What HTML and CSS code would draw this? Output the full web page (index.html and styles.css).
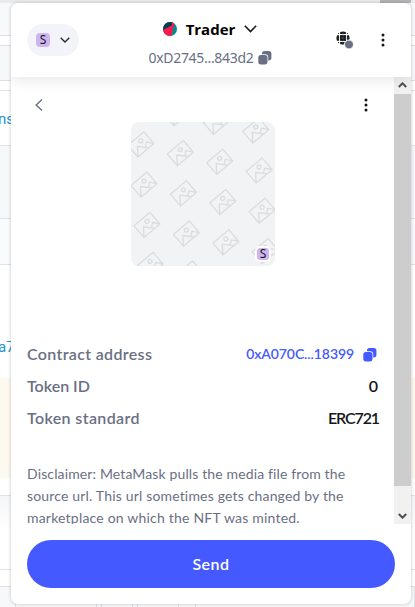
FILE: index.html
```html
<!DOCTYPE html>
<html lang="en">
<head>
<meta charset="utf-8">
<title>Wallet</title>
<link rel="stylesheet" href="styles.css">
</head>
<body>
<div class="page">
  <div class="bar"><i></i></div>
  <div class="strip s1"></div>
  <div class="strip s2"></div>
  <div class="strip s3"></div>
  <div class="strip s4"></div>
  <div class="strip s5">ns</div>
  <div class="strip s6"></div>
  <div class="strip s7"></div>
  <div class="strip s8">a7</div>
  <div class="strip s9"></div>
  <div class="strip s10"></div>
  <div class="strip s11"></div>
  <div class="strip s12"></div>
  <div class="strip s13"><b></b><b></b><b></b><b></b></div>
</div>
<main class="popup">
  <header class="header">
    <button class="network"><span class="badge">S</span>
      <svg width="10" height="6" viewBox="0 0 10 6"><path d="M.7.7 5 5 9.3.7" fill="none" stroke="#24272a" stroke-width="1.3"/></svg>
    </button>
    <div class="account">
      <div class="name">
        <svg class="avatar" width="14" height="14" viewBox="0 0 14 14"><defs><clipPath id="av"><circle cx="7" cy="7" r="7"/></clipPath></defs><g clip-path="url(#av)"><path fill="#018e8c" d="M0 0h14v14H0z"/><path fill="#fc1950" d="M0 7.5 11 2 8.5 14H0z"/><path fill="#033f50" d="M0 0h10.5L9.5 3 0 8z"/><path fill="#fc1950" d="M9 0h2.5L11 4 9 3.5z"/></g></svg>
        <span>Trader</span>
        <svg width="13" height="8" viewBox="0 0 13 8"><path d="M.8.8 6.5 6.6 12.2.8" fill="none" stroke="#141618" stroke-width="1.5"/></svg>
      </div>
      <div class="address"><span>0xD2745...843d2</span>
        <svg width="14" height="14" viewBox="0 0 14 14"><use href="#copy"/></svg>
      </div>
    </div>
    <div class="actions">
      <svg width="18" height="18" viewBox="0 0 18 18"><circle cx="7" cy="7" r="6.6" fill="#141618"/><path d="M3.6 0v14M10.4 0v14M0 3.6h14M0 10.4h14" stroke="#fff" stroke-width="1.1" fill="none"/><path d="M4.2 4.2h5.6v5.6H4.2z" fill="#141618"/><path d="M7 .5v13M.5 7h13" stroke="#777" stroke-width=".4"/><circle cx="13" cy="13.5" r="4.5" fill="#6a7084" stroke="#fff"/></svg>
      <svg width="4" height="14" viewBox="0 0 4 14" fill="#141618"><circle cx="2" cy="2" r="1.5"/><circle cx="2" cy="7" r="1.5"/><circle cx="2" cy="12" r="1.5"/></svg>
    </div>
  </header>
  <div class="body">
    <section class="content">
      <div class="nav">
        <svg width="8" height="12" viewBox="0 0 8 12"><path d="M7 .5 1.2 6 7 11.5" fill="none" stroke="#6a7084" stroke-width="1.4"/></svg>
        <svg width="4" height="14" viewBox="0 0 4 14" fill="#141618"><circle cx="2" cy="2" r="1.5"/><circle cx="2" cy="7" r="1.5"/><circle cx="2" cy="12" r="1.5"/></svg>
      </div>
      <div class="nft">
        <svg width="144" height="144" viewBox="0 0 144 144">
          <defs>
            <g id="pic" fill="none" stroke="#dadcde" stroke-width="1.3" stroke-linejoin="round"><path d="M-13 1 3-12.5 13-.7-3 12.7ZM-3 12.7-3.5 2 8 3.5M4.5 3 5.5-2.3 13-.9"/><circle cx="0" cy="-3.4" r="2"/></g>
            <g id="row"><use href="#pic" x="-39.4" y="-8.7"/><use href="#pic"/><use href="#pic" x="39.4" y="8.7"/><use href="#pic" x="78.8" y="17.4"/></g>
            <g id="copy"><rect x="4" y="0" width="9.4" height="9.4" rx="2.6" fill="currentColor"/><rect x="-.4" y="3.3" width="10.6" height="10.6" rx="3" fill="#fff"/><rect x=".3" y="4" width="9.2" height="9.4" rx="2.6" fill="currentColor"/></g>
          </defs>
          <use href="#row" x="46" y="-9"/><use href="#row" x="49.3" y="31"/><use href="#row" x="52.4" y="71.2"/><use href="#row" x="55.4" y="111.5"/><use href="#row" x="58.5" y="151.5"/>
        </svg>
        <span class="badge small">S</span>
      </div>
      <dl class="details">
        <div><dt class="k1">Contract address</dt><dd class="link"><span>0xA070C...18399</span><svg width="14" height="14" viewBox="0 0 14 14"><use href="#copy"/></svg></dd></div>
        <div><dt class="k2">Token ID</dt><dd>0</dd></div>
        <div><dt class="k3">Token standard</dt><dd class="std">ERC721</dd></div>
      </dl>
      <p class="disclaimer"><span class="l1">Disclaimer: MetaMask pulls the media file from the</span><br><span class="l2">source url. This url sometimes gets changed by the</span><br><span class="l3">marketplace on which the NFT was minted.</span></p>
    </section>
    <div class="scrollbar">
      <svg width="9" height="6" viewBox="0 0 9 6"><path d="M.8 5 4.5 1.3 8.2 5" fill="none" stroke="#505050" stroke-width="2"/></svg>
      <i></i>
      <svg width="9" height="6" viewBox="0 0 9 6"><path d="M.8 1 4.5 4.7 8.2 1" fill="none" stroke="#505050" stroke-width="2"/></svg>
    </div>
  </div>
  <footer class="footer"><button class="send">Send</button></footer>
</main>
</body>
</html>
```
FILE: styles.css
```css
* { box-sizing: border-box; }
body { margin: 0; width: 415px; height: 607px; overflow: hidden; position: relative; background: #fff; font-family: Lato, "Open Sans", sans-serif; font-variant-ligatures: none; }
button { border: 0; padding: 0; font: inherit; }
svg { display: block; flex: none; }
.page { display: flex; flex-direction: column; height: 607px; }
.bar { height: 3px; background: #ebebed; display: flex; justify-content: flex-end; padding-right: 4px; }
.bar i { width: 31px; background: #b4b4b6; }
.strip { flex: none; color: #2493cc; font: 15px/20px Roboto, sans-serif; }
.s1 { height: 33px; background: #f8f9fb; border-bottom: 1px solid #dcdfe3; }
.s2 { height: 9px; }
.s3 { height: 36px; background: #f7f8fa; border: solid #dcdfe5; border-width: 1px 0; }
.s4 { height: 10px; border-bottom: 1px solid #e2e5e8; }
.s5 { height: 54px; padding-top: 18px; margin-left: -2px; }
.s6 { height: 74px; background: #f7f8fa; border: solid #dfe2e6; border-width: 1px 0; }
.s7 { height: 46px; background: #fafbfc; border-bottom: 1px solid #dfe4e7; }
.s8 { height: 113px; padding-top: 72px; margin-left: -2px; }
.s9 { height: 100px; background: #fdf8f0; }
.s10 { height: 18px; border-bottom: 1px solid #dfe2e6; }
.s11 { height: 74px; background: linear-gradient(#f5f6f8, #fff 35px); border-bottom: 1px solid #dfe2e6; }
.s12 { height: 16px; }
.s13 { height: 21px; background: #f7f8fa; border-top: 1px solid #dfe2e6; display: flex; gap: 4px; padding-left: 15px; }
.s13 b { width: 82px; border: solid #dfe2e6; border-width: 0 1px; }
.s13 b:nth-child(2) { width: 32px; }
.s13 b:nth-child(3) { width: 42px; margin-right: 12px; }
.s13 b:nth-child(4) { flex: 1; }
.popup { position: absolute; left: 11px; top: 3px; width: 400px; height: 601px; background: #fff; border-radius: 7px; overflow: hidden; box-shadow: 0 0 3px 1px #0002; display: flex; flex-direction: column; color: #141618; }
.header { height: 74px; flex: none; display: grid; grid-template-columns: 100px 1fr 100px; box-shadow: 0 2px 14px #0000001c; z-index: 1; padding: 0 16px; background: #fff; }
.network { width: 52px; height: 32px; margin-top: 21px; border-radius: 16px; background: #f3f4f9; display: flex; align-items: center; gap: 10px; padding-left: 9px; }
.badge { width: 14px; height: 14px; border-radius: 4px; background: #cfb5f0; color: #141618; font: 12px/14px "Noto Sans", sans-serif; text-align: center; }
.account { display: flex; flex-direction: column; align-items: center; padding-top: 14px; margin-left: -2px; }
.name { display: flex; align-items: center; gap: 9px; height: 24px; font: bold 15px/24px "Open Sans", sans-serif; color: #000; white-space: nowrap; }
.name span { margin-top: -1px; }
.address { display: flex; align-items: center; gap: 4px; height: 22px; margin-top: 6px; color: #6a7084; font: 14px/22px "Noto Sans", sans-serif; letter-spacing: -.3px; }
.actions { display: flex; justify-content: flex-end; padding: 28px 10px 0 0; gap: 27px; }
.actions svg:last-child { margin-top: 2px; }
.body { flex: none; height: 447px; display: flex; overflow: hidden; }
.content { width: 383px; padding: 0 16px; }
.nav { height: 45px; padding: 21px 10px 0 8px; display: flex; justify-content: space-between; }
.nav svg:first-child { margin-top: 1px; }
.nft { position: relative; width: 144px; height: 144px; border-radius: 8px; margin-left: 104px; background: #f2f3f4; overflow: hidden; }
.small { position: absolute; right: 4px; bottom: 4px; width: 16px; height: 16px; border: 2px solid #fff; border-radius: 5px; line-height: 12px; }
.details { margin: 72px 0 0; font-size: 16px; font-weight: 600; }
.details div { display: flex; justify-content: space-between; height: 32px; line-height: 32px; white-space: nowrap; }
dt { color: #6a7084; }
.k1 { letter-spacing: .34px; }
.k3 { letter-spacing: .37px; }
dd { margin: 0; }
.std { letter-spacing: -1.1px; margin-right: -1px; }
.link { color: #4459ff; font-size: 14px; letter-spacing: -.08px; display: flex; align-items: center; gap: 9px; padding-right: 1px; }
.link svg { margin-top: 1px; }
.disclaimer { margin: 29px 0 0; color: #6a7084; font-size: 14px; line-height: 22px; white-space: nowrap; }
.l1 { letter-spacing: .13px; }
.l2 { letter-spacing: .17px; }
.l3 { letter-spacing: .2px; }
.scrollbar { width: 17px; background: #f1f1f1; display: flex; flex-direction: column; align-items: center; padding: 5px 0; }
.scrollbar i { width: 17px; height: 392px; background: #cdcdcd; margin: 6px 0 27px; }
.footer { padding: 16px 16px; }
.send { width: 368px; height: 48px; border-radius: 24px; background: #4459ff; color: #fff; font-size: 16px; font-weight: 600; letter-spacing: .5px; display: block; padding-bottom: 1px; }
```
